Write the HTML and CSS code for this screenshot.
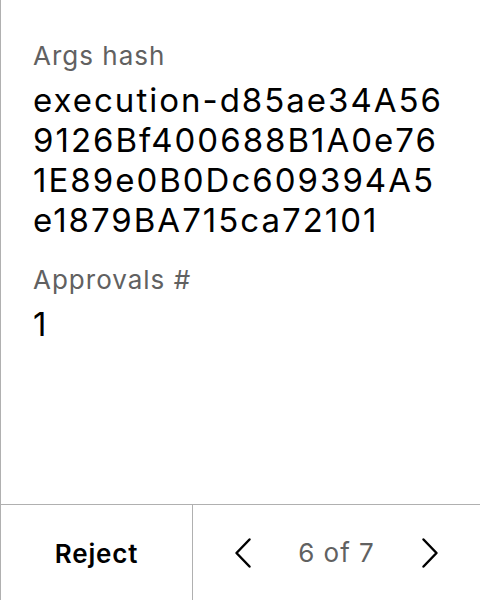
FILE: index.html
```html
<!DOCTYPE html>
<html>
<head>
<meta charset="utf-8">
<link rel="stylesheet" href="styles.css">
</head>
<body>
<div class="panel">
  <div class="content">
    <div class="field">
      <div class="label">Args hash</div>
      <div class="value hash">execution-d85ae34A569126Bf400688B1A0e761E89e0B0Dc609394A5e1879BA715ca72101</div>
    </div>
    <div class="field">
      <div class="label">Approvals #</div>
      <div class="value">1</div>
    </div>
  </div>
  <div class="footer">
    <button class="reject">Reject</button>
    <div class="pager">
      <button class="nav" aria-label="Previous">
        <svg width="18" height="32" viewBox="0 0 18 32"><path d="M15.5 2.5 L2.5 16 L15.5 29.5" fill="none" stroke="#000" stroke-width="2.5" stroke-linecap="round" stroke-linejoin="round"/></svg>
      </button>
      <span class="count">6 of 7</span>
      <button class="nav" aria-label="Next">
        <svg width="18" height="32" viewBox="0 0 18 32"><path d="M2.5 2.5 L15.5 16 L2.5 29.5" fill="none" stroke="#000" stroke-width="2.5" stroke-linecap="round" stroke-linejoin="round"/></svg>
      </button>
    </div>
  </div>
</div>
</body>
</html>
```
FILE: styles.css
```css
* { box-sizing: border-box; }
html, body { margin: 0; padding: 0; background: #fff; }
body { font-family: Inter, "Noto Sans", sans-serif; color: #000; }
.panel {
  width: 480px;
  height: 600px;
  border-left: 1px solid #b0b0b0;
  display: flex;
  flex-direction: column;
}
.content {
  flex: 1;
  padding: 40px 32px 0 32px;
  display: flex;
  flex-direction: column;
  gap: 24px;
}
.label {
  font-size: 26px;
  line-height: 32px;
  letter-spacing: 1px;
  color: #616161;
}
.value {
  font-size: 33px;
  line-height: 40px;
  letter-spacing: 2px;
  margin-top: 8px;
}
.hash { word-break: break-all; }
.footer {
  height: 96px;
  border-top: 1px solid #b0b0b0;
  display: flex;
}
button { font-family: inherit; background: none; border: 0; padding: 0; cursor: pointer; color: #000; }
.reject {
  width: 192px;
  border-right: 1px solid #b0b0b0;
  font-size: 26px;
  font-weight: 600;
  letter-spacing: 0.8px;
  padding-top: 2px;
}
.pager {
  flex: 1;
  display: flex;
  align-items: center;
  justify-content: space-between;
  padding: 0 41px 0 41px;
}
.nav { display: flex; align-items: center; }
.count { font-size: 26px; letter-spacing: 1px; color: #616161; }
```
